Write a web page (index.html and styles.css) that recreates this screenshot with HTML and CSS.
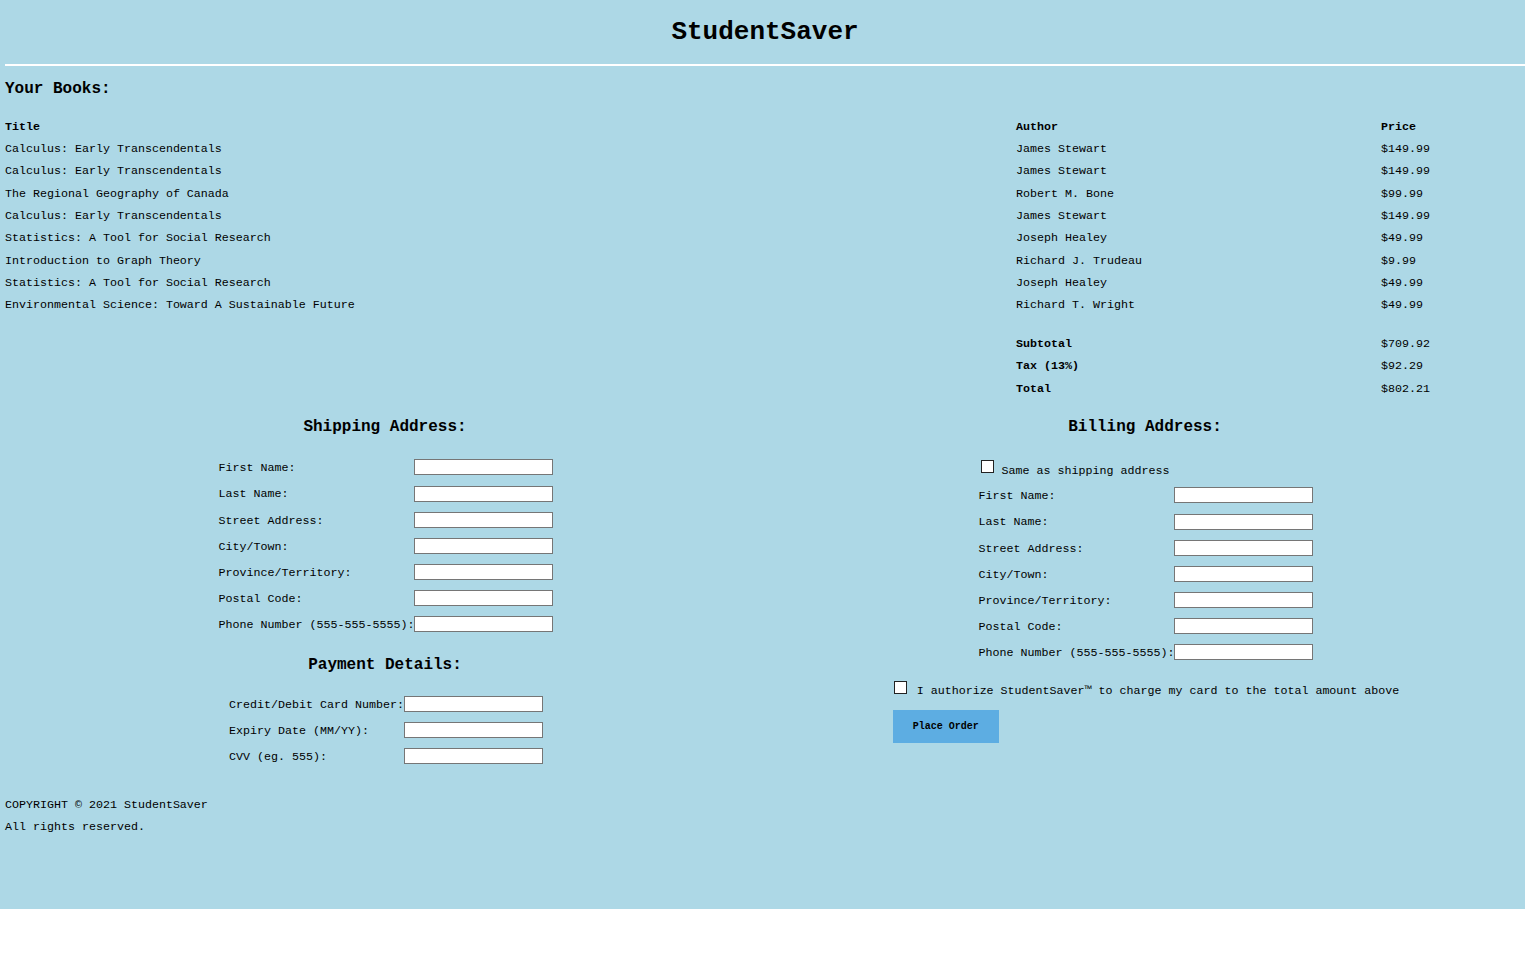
FILE: index.html
```html
<!DOCTYPE html>
<html lang="en">
<head>
<meta charset="utf-8">
<title>StudentSaver</title>
<link rel="stylesheet" href="styles.css">
</head>
<body>
<div class="page">
  <header class="site-header">
    <h1 class="brand">StudentSaver</h1>
  </header>
  <hr class="rule">
  <main>
    <h2 class="section-title">Your Books:</h2>
    <table class="books">
      <colgroup>
        <col class="c-title">
        <col class="c-author">
        <col class="c-price">
      </colgroup>
      <thead>
        <tr><th>Title</th><th>Author</th><th>Price</th></tr>
      </thead>
      <tbody>
        <tr><td>Calculus: Early Transcendentals</td><td>James Stewart</td><td>$149.99</td></tr>
        <tr><td>Calculus: Early Transcendentals</td><td>James Stewart</td><td>$149.99</td></tr>
        <tr><td>The Regional Geography of Canada</td><td>Robert M. Bone</td><td>$99.99</td></tr>
        <tr><td>Calculus: Early Transcendentals</td><td>James Stewart</td><td>$149.99</td></tr>
        <tr><td>Statistics: A Tool for Social Research</td><td>Joseph Healey</td><td>$49.99</td></tr>
        <tr><td>Introduction to Graph Theory</td><td>Richard J. Trudeau</td><td>$9.99</td></tr>
        <tr><td>Statistics: A Tool for Social Research</td><td>Joseph Healey</td><td>$49.99</td></tr>
        <tr><td>Environmental Science: Toward A Sustainable Future</td><td>Richard T. Wright</td><td>$49.99</td></tr>
      </tbody>
      <tbody class="totals">
        <tr class="spacer"><td colspan="3"></td></tr>
        <tr><td></td><th>Subtotal</th><td>$709.92</td></tr>
        <tr><td></td><th>Tax (13%)</th><td>$92.29</td></tr>
        <tr><td></td><th>Total</th><td>$802.21</td></tr>
      </tbody>
    </table>

    <div class="checkout">
      <section class="col">
        <h3 class="form-title">Shipping Address:</h3>
        <div class="fields">
          <label for="s-first">First Name:</label><input id="s-first" type="text">
          <label for="s-last">Last Name:</label><input id="s-last" type="text">
          <label for="s-street">Street Address:</label><input id="s-street" type="text">
          <label for="s-city">City/Town:</label><input id="s-city" type="text">
          <label for="s-prov">Province/Territory:</label><input id="s-prov" type="text">
          <label for="s-postal">Postal Code:</label><input id="s-postal" type="text">
          <label for="s-phone">Phone Number (555-555-5555):</label><input id="s-phone" type="text">
        </div>
        <h3 class="form-title payment-title">Payment Details:</h3>
        <div class="fields payment-fields">
          <label for="p-card">Credit/Debit Card Number:</label><input id="p-card" type="text">
          <label for="p-exp">Expiry Date (MM/YY):</label><input id="p-exp" type="text">
          <label for="p-cvv">CVV (eg. 555):</label><input id="p-cvv" type="text">
        </div>
      </section>

      <section class="col">
        <h3 class="form-title">Billing Address:</h3>
        <div class="fields billing-fields">
          <div class="same-row"><input id="same" class="check" type="checkbox"><label for="same">Same as shipping address</label></div>
          <label for="b-first">First Name:</label><input id="b-first" type="text">
          <label for="b-last">Last Name:</label><input id="b-last" type="text">
          <label for="b-street">Street Address:</label><input id="b-street" type="text">
          <label for="b-city">City/Town:</label><input id="b-city" type="text">
          <label for="b-prov">Province/Territory:</label><input id="b-prov" type="text">
          <label for="b-postal">Postal Code:</label><input id="b-postal" type="text">
          <label for="b-phone">Phone Number (555-555-5555):</label><input id="b-phone" type="text">
        </div>
        <div class="order-block">
          <div class="authorize"><input id="auth" class="check auth-check" type="checkbox"><label for="auth">I authorize StudentSaver™ to charge my card to the total amount above</label></div>
          <button class="order-btn" type="submit">Place Order</button>
        </div>
      </section>
    </div>
  </main>
  <footer class="site-footer">
    <p>COPYRIGHT © 2021 StudentSaver</p>
    <p>All rights reserved.</p>
  </footer>
</div>
</body>
</html>
```

FILE: styles.css
```css
html {
  background: #ffffff;
}

body {
  margin: 0;
  font-family: "Liberation Mono", "Courier New", monospace;
  color: #000;
}

.page {
  width: 1525px;
  min-height: 909px;
  box-sizing: border-box;
  padding: 0 0 0 5px;
  background: #add8e6;
  display: flow-root;
}

.brand {
  margin: 17px 0 0;
  font-size: 26px;
  line-height: 30px;
  font-weight: bold;
  text-align: center;
}

.rule {
  margin: 17px 0 0;
  height: 2px;
  border: 0;
  background: #ffffff;
}

.section-title {
  margin: 12.7px 0 0;
  font-size: 16px;
  line-height: 20px;
  font-weight: bold;
}

.books {
  margin-top: 17px;
  width: 1520px;
  border-collapse: collapse;
  table-layout: fixed;
  font-size: 11.67px;
  line-height: 22.33px;
}

.c-title { width: 1011px; }
.c-author { width: 365px; }
.c-price { width: 144px; }

.books th,
.books td {
  padding: 0;
  text-align: left;
  white-space: nowrap;
  vertical-align: baseline;
}

.books th {
  font-weight: bold;
}

.books .spacer td {
  height: 16.4px;
  line-height: 0;
}

.checkout {
  display: grid;
  grid-template-columns: 1fr 1fr;
  width: 1520px;
}

.col {
  display: flex;
  flex-direction: column;
  align-items: center;
}

.form-title {
  margin: 17px 0 0;
  font-size: 16px;
  line-height: 20px;
  font-weight: bold;
}

.fields {
  margin: 17.3px 0 0 2px;
  display: grid;
  grid-template-columns: auto 139px;
  grid-auto-rows: 26.17px;
  align-items: center;
  font-size: 11.67px;
}

.fields label {
  white-space: nowrap;
  position: relative;
  top: 0.8px;
}

.fields input[type="text"] {
  width: 139px;
  height: 16px;
  box-sizing: border-box;
  margin: 0;
  padding: 0 2px;
  border: 1px solid #767676;
  background: #ffffff;
  font: inherit;
}

.payment-title {
  margin-top: 17.5px;
}

.payment-fields {
  margin-top: 16.1px;
}

.billing-fields {
  grid-template-rows: 28px;
}

.same-row {
  grid-column: 1 / -1;
  align-self: start;
  padding: 6px 0 0 2px;
  white-space: nowrap;
}

.check {
  appearance: none;
  -webkit-appearance: none;
  display: inline-block;
  width: 13px;
  height: 13px;
  box-sizing: border-box;
  margin: 0 8px 0 0;
  border: 1px solid #222222;
  background: #ffffff;
  vertical-align: baseline;
}

.order-block {
  margin: 15.8px 0 0 2px;
  display: flex;
  flex-direction: column;
  align-items: flex-start;
}

.authorize {
  font-size: 11.67px;
  white-space: nowrap;
}

.auth-check {
  margin: 0 10px 0 1px;
}

.order-btn {
  margin-top: 11.5px;
  width: 106px;
  height: 33px;
  padding: 0;
  border: 0;
  background: #5dade2;
  color: #000;
  font-family: "Liberation Mono", "Courier New", monospace;
  font-size: 10px;
  font-weight: bold;
}

.site-footer {
  margin-top: 26px;
  font-size: 11.67px;
  line-height: 21.7px;
}

.site-footer p {
  margin: 0;
}
```
